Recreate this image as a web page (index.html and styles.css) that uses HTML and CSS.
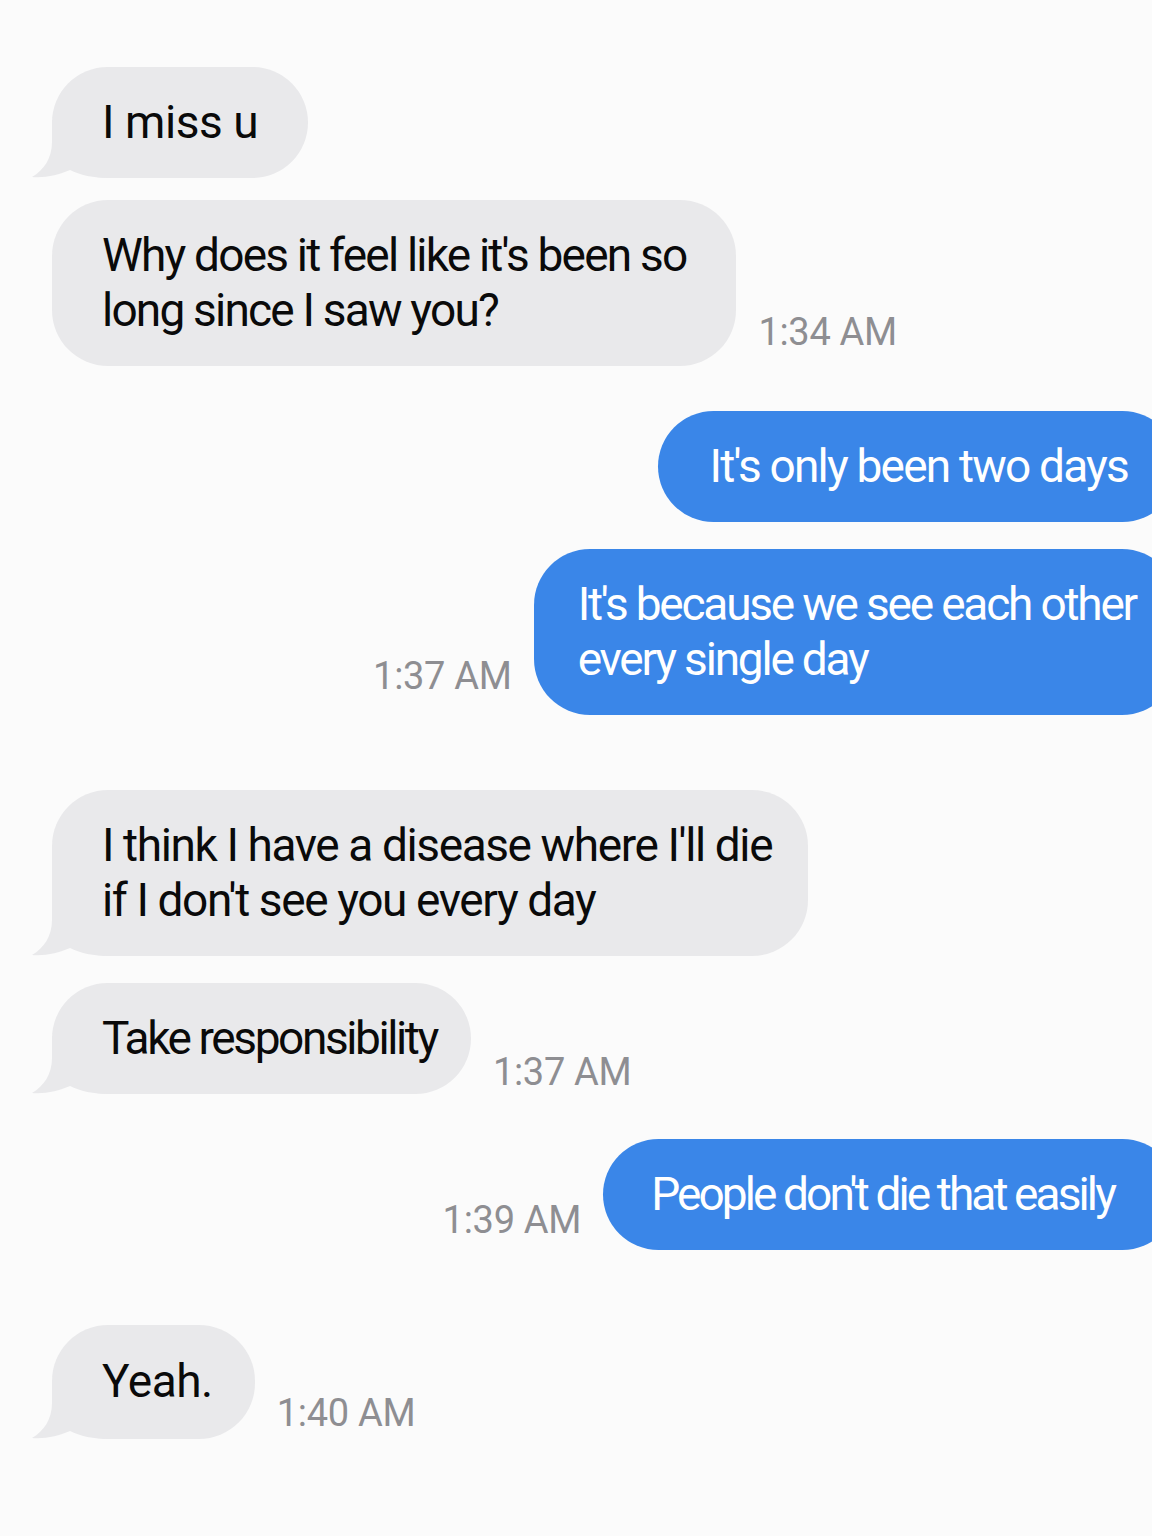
FILE: index.html
```html
<!DOCTYPE html>
<html lang="en">
  <head>
    <meta charset="UTF-8" />
    <title>Messages</title>
    <link rel="stylesheet" href="styles.css">
  </head>
  <body>
    <div class="thread">
      <div class="row in">
        <div class="bubble gray tail loose">I miss u</div>
      </div>
      <div class="row in tight">
        <div class="bubble gray snug">Why does it feel like it's been so<br />long since I saw you?</div>
        <span class="time t1">1:34 AM</span>
      </div>

      <div class="row out mid">
        <div class="bubble blue snug">It's only been two days</div>
      </div>
      <div class="row out near">
        <span class="time t2">1:37 AM</span>
        <div class="bubble blue wide">It's because we see each other<br />every single day</div>
      </div>

      <div class="row in gap">
        <div class="bubble gray tail long">I think I have a disease where I'll die<br />if I don't see you every day</div>
      </div>
      <div class="row in near">
        <div class="bubble gray tail tight-text">Take responsibility</div>
        <span class="time t3">1:37 AM</span>
      </div>

      <div class="row out mid">
        <span class="time t4">1:39 AM</span>
        <div class="bubble blue short">People don't die that easily</div>
      </div>

      <div class="row in gap">
        <div class="bubble gray tail loose last">Yeah.</div>
        <span class="time t5">1:40 AM</span>
      </div>
    </div>
  </body>
</html>
```

FILE: styles.css
```css
html,
body {
  margin: 0;
  background: #fbfbfb;
  overflow-x: hidden;
}
body {
  font-family: Roboto, "Liberation Sans", sans-serif;
  width: 1152px;
  min-height: 1536px;
}
.thread {
  display: flex;
  flex-direction: column;
  padding: 67px 0 0 52px;
}
.row {
  display: flex;
  align-items: flex-end;
  gap: 22px;
}
.row.out {
  justify-content: flex-end;
  margin-right: -26px;
}
.row.tight {
  margin-top: 22px;
}
.row.near {
  margin-top: 27px;
}
.row.mid {
  margin-top: 45px;
}
.row.gap {
  margin-top: 75px;
}
.bubble {
  position: relative;
  isolation: isolate;
  font-size: 46px;
  letter-spacing: -1.4px;
  line-height: 55px;
  padding: 28px 50px;
  border-radius: 56px;
  white-space: nowrap;
}
.bubble.gray {
  background: #e9e9eb;
  color: #0a0a0a;
}
.bubble.blue {
  background: #3a86e8;
  color: #ffffff;
  padding-left: 52px;
}
.bubble.loose {
  letter-spacing: -0.45px;
}
.bubble.snug {
  letter-spacing: -1.8px;
}
.bubble.long {
  padding-right: 36px;
}
.bubble.tight-text {
  letter-spacing: -2.4px;
  padding-right: 34px;
}
.bubble.last {
  padding: 29px 42px 30px 50px;
}
.bubble.wide {
  letter-spacing: -2.2px;
  padding-left: 44px;
  padding-right: 42px;
}
.bubble.short {
  letter-spacing: -2.9px;
  padding-left: 48px;
  padding-right: 64px;
}
.bubble.tail::before {
  content: "";
  position: absolute;
  z-index: -1;
  left: -20px;
  bottom: 0;
  width: 80px;
  height: 58px;
  background: #e9e9eb;
  clip-path: path("M20 0 L20 22 C20 38 12 50 0 57 C14 58 26 55 38 50 C48 55 60 58 80 58 L80 0 Z");
}
.time {
  font-size: 38px;
  line-height: 38px;
  color: #8e8e92;
  letter-spacing: -0.3px;
  white-space: nowrap;
}
.time.t1 {
  margin-bottom: 15px;
}
.time.t2 {
  margin-bottom: 20px;
}
.time.t3 {
  margin-bottom: 3px;
}
.time.t4 {
  margin-bottom: 11px;
}
.time.t5 {
  margin-bottom: 7px;
}
```
